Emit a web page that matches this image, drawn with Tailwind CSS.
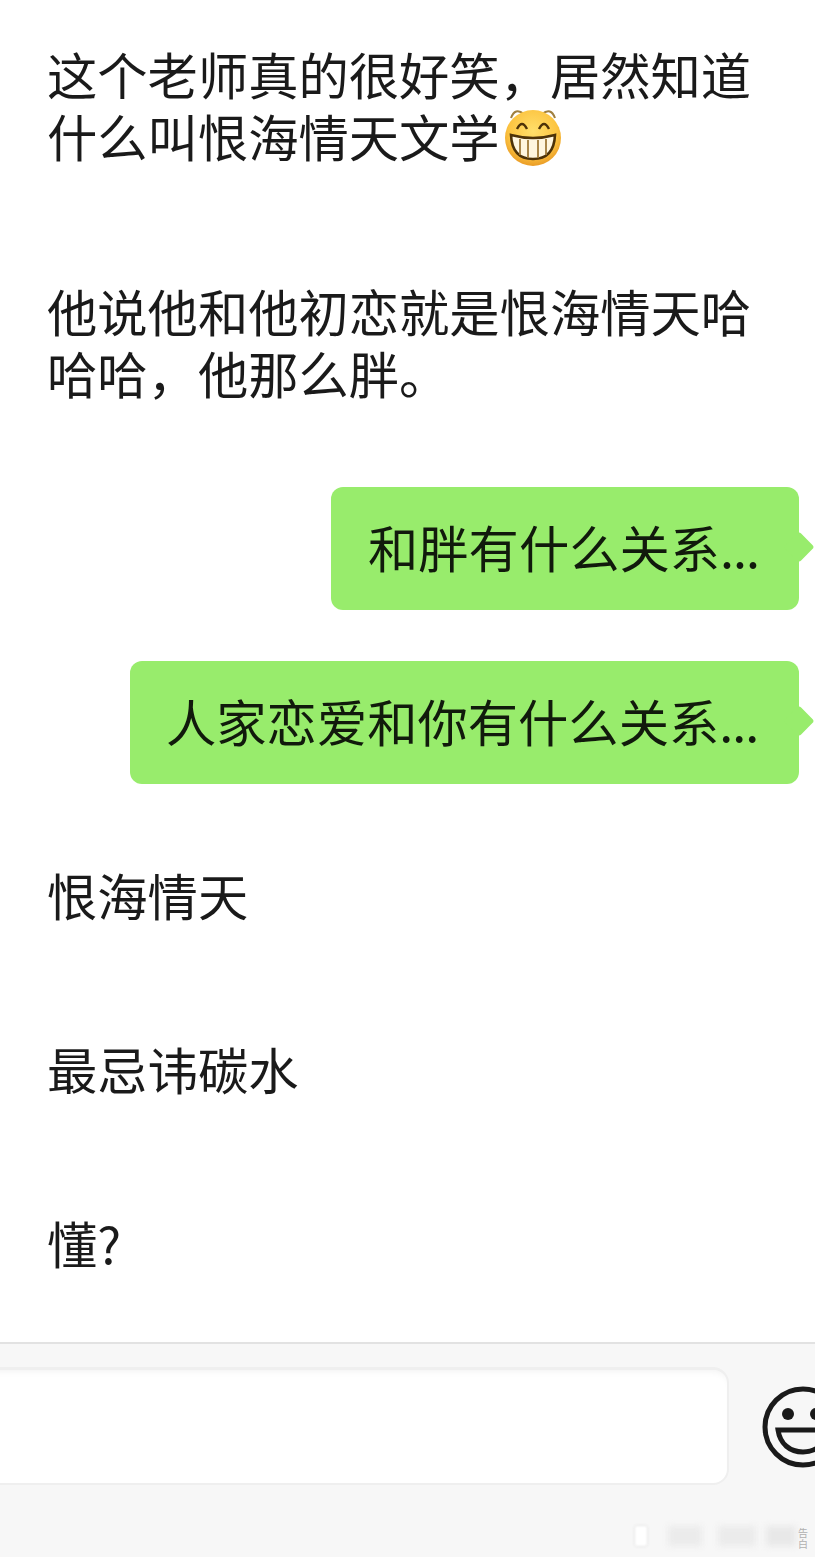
<!DOCTYPE html>
<html lang="zh-CN">
<head>
<meta charset="UTF-8">
<title>聊天</title>
<script src="https://cdn.jsdelivr.net/npm/@tailwindcss/browser@4"></script>
</head>
<body class="bg-white w-[815px] h-[1557px] overflow-hidden flex flex-col font-['Noto_Sans_CJK_SC','Noto_Sans',sans-serif] text-[50.3px] leading-[62px] text-[#1a1a1a]">

<main class="h-[1342px] shrink-0 pt-[42px]">
    <p class="pl-[47px] w-[780px]">这个老师真的很好笑，居然知道<br>什么叫恨海情天文学<svg class="inline-block ml-[3px] align-[-10px] w-[60px] h-[62px]" viewBox="0 0 60 62">
        <defs><radialGradient id="face" cx="50%" cy="38%" r="62%"><stop offset="0%" stop-color="#ffdf6b"/><stop offset="70%" stop-color="#fcc441"/><stop offset="100%" stop-color="#ea9c26"/></radialGradient></defs>
        <path d="M8 13 Q12 2 21 9 M52 13 Q48 2 39 9" fill="none" stroke="#a08040" stroke-width="2"/>
        <circle cx="30" cy="33" r="28" fill="url(#face)"/>
        <path d="M14 24 Q19 14 24 24 M36 24 Q41 14 46 24" fill="none" stroke="#4d3208" stroke-width="2.4"/>
        <path d="M8 30 Q30 36 52 30 Q51 54 30 54 Q9 54 8 30Z" fill="#fff6df" stroke="#4d3208" stroke-width="2.6"/>
        <path d="M17 34 V50 M25 35 V53 M35 35 V53 M43 34 V50" stroke="#a07a3a" stroke-width="1.8"/>
    </svg></p>

    <p class="pl-[47px] w-[780px] mt-[112px]">他说他和他初恋就是恨海情天哈<br>哈哈，他那么胖。</p>

    <div class="mt-[84px] flex flex-col items-end gap-[51px] pr-[16px]">
        <div class="relative w-[468px] h-[123px] rounded-[12px] bg-[#98ec6c] text-[#111a0c] flex items-center pl-[37px] pb-[6px] whitespace-nowrap">
            <span>和胖有什么关系<span class="tracking-[-1px]">...</span></span>
            <span class="absolute right-[-11px] top-[49px] w-[22px] h-[22px] rotate-45 rounded-[3px] bg-[#98ec6c]"></span>
        </div>
        <div class="relative w-[669px] h-[123px] rounded-[12px] bg-[#98ec6c] text-[#111a0c] flex items-center pl-[36px] pb-[6px] whitespace-nowrap">
            <span>人家恋爱和你有什么关系<span class="tracking-[-1px]">...</span></span>
            <span class="absolute right-[-11px] top-[49px] w-[22px] h-[22px] rotate-45 rounded-[3px] bg-[#98ec6c]"></span>
        </div>
    </div>

    <p class="pl-[47px] mt-[79px]">恨海情天</p>
    <p class="pl-[47px] mt-[112px]">最忌讳碳水</p>
    <p class="pl-[47px] mt-[112px]">懂?</p>
</main>

<footer class="relative flex-1 bg-[#f7f7f7] border-t-2 border-[#e2e2e2] overflow-hidden">
    <div class="flex items-start pt-[23px]">
        <div class="ml-[-20px] w-[749px] h-[118px] shrink-0 rounded-[16px] bg-white border-2 border-[#efefef] border-t-[3px] shadow-[inset_0_6px_8px_-6px_#eeeeee]"></div>
        <svg class="ml-[33px] mt-[19px] w-[82px] h-[82px] shrink-0" viewBox="0 0 82 82" fill="none" stroke="#1a1a1a">
            <circle cx="41" cy="41" r="38" stroke-width="5"/>
            <circle cx="26" cy="28" r="6" fill="#1a1a1a" stroke="none"/>
            <circle cx="54" cy="28" r="6" fill="#1a1a1a" stroke="none"/>
            <path d="M16 44 H66 C64 58 54 66 41 66 C28 66 18 58 16 44Z" stroke-width="5"/>
        </svg>
    </div>
    <div class="absolute left-[634px] top-[181px] flex items-center h-[22px]">
        <span class="w-[14px] h-[22px] bg-white border border-[#e4e4e4] rounded-[3px] blur-[1px]"></span>
        <span class="ml-[20px] w-[34px] h-[20px] bg-[#ebebeb] blur-[3px]"></span>
        <span class="ml-[16px] w-[38px] h-[20px] bg-[#ebebeb] blur-[3px]"></span>
        <span class="ml-[10px] w-[30px] h-[20px] bg-[#e8e8e8] blur-[3px]"></span>
    </div>
    <span class="absolute left-[798px] top-[183px] text-[10px] leading-[11px] w-[10px] text-[#b0b0b0]">告白</span>
</footer>

</body>
</html>
